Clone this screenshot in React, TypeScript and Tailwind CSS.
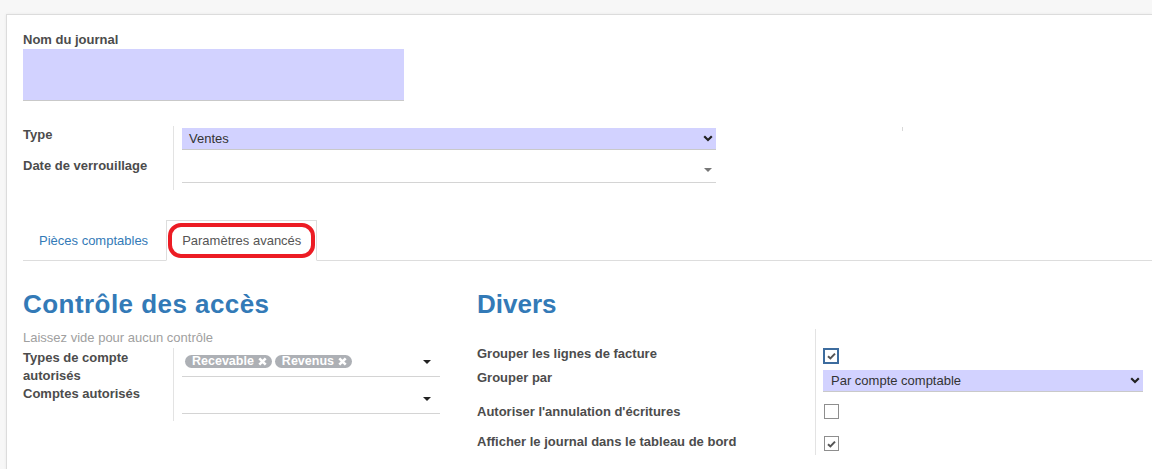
import React from "react";

const labelCls = "text-[13px] font-bold text-[#4c4c4c] leading-[18px]";

function Chevron() {
  return (
    <svg width="10" height="7" viewBox="0 0 10 7" className="shrink-0">
      <path d="M1.2 1.3 L5 5 L8.8 1.3" fill="none" stroke="#222" strokeWidth="2.2" />
    </svg>
  );
}

function Caret({ color = "#222" }: { color?: string }) {
  return (
    <svg width="8" height="4" viewBox="0 0 8 4" className="shrink-0">
      <path d="M0 0 H8 L4 4 Z" fill={color} />
    </svg>
  );
}

function Check() {
  return (
    <svg width="9" height="8" viewBox="0 0 9 8">
      <path d="M1 4.2 L3.4 6.4 L8 1.6" fill="none" stroke="#555" strokeWidth="2" />
    </svg>
  );
}

function Checkbox({ checked, focused }: { checked?: boolean; focused?: boolean }) {
  return (
    <div
      className={
        focused
          ? "w-[16px] h-[16px] border-2 border-[#3d6c9e] bg-white flex items-center justify-center"
          : "w-[15px] h-[15px] border border-[#8e8e8e] bg-white flex items-center justify-center"
      }
    >
      {checked && <Check />}
    </div>
  );
}

function Tag({ text }: { text: string }) {
  return (
    <span className="inline-flex items-center h-[13px] rounded-full bg-[#adb0b5] pl-[7px] pr-[5px] text-white text-[12.5px] font-bold leading-[13px]">
      {text}
      <svg width="9" height="9" viewBox="0 0 9 9" className="ml-[4px]">
        <path d="M1.3 1.3 L7.7 7.7 M7.7 1.3 L1.3 7.7" stroke="#fff" strokeWidth="2.6" />
      </svg>
    </span>
  );
}

export default function App() {
  return (
    <div className="min-h-screen bg-[#f7f7f7] pt-[14px] pl-[6px] font-['Liberation_Sans',Arial,sans-serif] overflow-hidden">
      <div className="bg-white border-l border-t border-[#dcdcdc] pl-4 pt-[16px] min-h-[460px] shadow-[0_0_3px_rgba(0,0,0,0.06)]">
        {/* journal name */}
        <div className={labelCls}>Nom du journal</div>
        <div className="w-[381px] h-[52px] bg-[#d2d2ff] border-b border-[#c9c9c9]" />

        {/* type / lock date */}
        <div className="mt-[25px] flex">
          <div className="w-[150px]">
            <div className="h-[24px] text-[13px] font-bold text-[#4c4c4c] leading-[17px]">Type</div>
            <div className={labelCls + " pt-[7px]"}>Date de verrouillage</div>
          </div>
          <div className="border-l border-[#e3e3e3] pl-[8px] w-[543px] h-[64px]">
            <div className="pt-[2px]">
              <div className="h-[22px] bg-[#d2d2ff] border-b border-[#c9c9c9] flex items-center justify-between pl-[7px] pr-[3px]">
                <span className="text-[13px] text-[#333]">Ventes</span>
                <Chevron />
              </div>
            </div>
            <div className="h-[33px] border-b border-[#d4d4d4] flex items-center justify-end pr-[4px] pt-[8px]">
              <Caret color="#777" />
            </div>
          </div>
          <div className="ml-[186px] mt-[1px] w-px h-[4px] bg-[#d8d8d8]" />
        </div>

        {/* tabs */}
        <div className="mt-[30px] flex border-b border-[#ddd]">
          <div className="-mb-px mr-[2px] border border-transparent px-[15px] py-[10px] leading-[19px] text-[13px] text-[#337ab7]">
            Pièces comptables
          </div>
          <div className="relative -mb-px border border-[#ddd] border-b-white bg-white px-[15px] py-[10px] leading-[19px] text-[13px] text-[#555]">
            Paramètres avancés
            <div className="absolute left-[1px] top-[2px] w-[147px] h-[35px] border-[4px] border-[#ec1c24] rounded-[13px]" />
          </div>
        </div>

        {/* tab content */}
        <div className="mt-[29px] flex">
          <div className="w-[454px] shrink-0">
            <div className="text-[26px] font-bold leading-[29px] tracking-[0.45px] text-[#337ab7]">Contrôle des accès</div>
            <div className="mt-[10px] text-[13px] leading-[18px] text-[#a0a0a0]">Laissez vide pour aucun contrôle</div>
            <div className="mt-[1px] flex">
              <div className="w-[150px] pt-px">
                <div className={labelCls + " h-[36px]"}>
                  Types de compte
                  <br />
                  autorisés
                </div>
                <div className={labelCls}>Comptes autorisés</div>
              </div>
              <div className="border-l border-[#e3e3e3] pl-[8px] w-[267px] h-[73px]">
                <div className="h-[29px] border-b border-[#d4d4d4] flex items-center justify-between pl-[3px] pr-[9px]">
                  <div className="flex gap-[3px] -mt-[1px]">
                    <Tag text="Recevable" />
                    <Tag text="Revenus" />
                  </div>
                  <Caret />
                </div>
                <div className="mt-[8px] h-[29px] border-b border-[#d4d4d4] flex items-center justify-end pr-[9px]">
                  <Caret />
                </div>
              </div>
            </div>
          </div>

          <div className="shrink-0">
            <div className="text-[26px] font-bold leading-[29px] text-[#337ab7]">Divers</div>
            <div className="mt-[10px] flex">
              <div className="w-[338px] pt-[16px]">
                <div className={labelCls}>Grouper les lignes de facture</div>
                <div className={labelCls + " mt-[6px]"}>Grouper par</div>
                <div className={labelCls + " mt-[16px]"}>Autoriser l'annulation d'écritures</div>
                <div className={labelCls + " mt-[12px]"}>Afficher le journal dans le tableau de bord</div>
              </div>
              <div className="border-l border-[#e3e3e3] pl-[7px] w-[328px] h-[126px]">
                <div className="mt-[19px]">
                  <Checkbox checked focused />
                </div>
                <div className="mt-[6px] w-[320px] h-[22px] bg-[#d2d2ff] border-b border-[#c9c9c9] flex items-center justify-between pl-[8px] pr-[3px]">
                  <span className="text-[13px] text-[#333]">Par compte comptable</span>
                  <Chevron />
                </div>
                <div className="mt-[12px] pl-px">
                  <Checkbox />
                </div>
                <div className="mt-[17px] pl-px">
                  <Checkbox checked />
                </div>
              </div>
            </div>
          </div>
        </div>
      </div>
    </div>
  );
}
